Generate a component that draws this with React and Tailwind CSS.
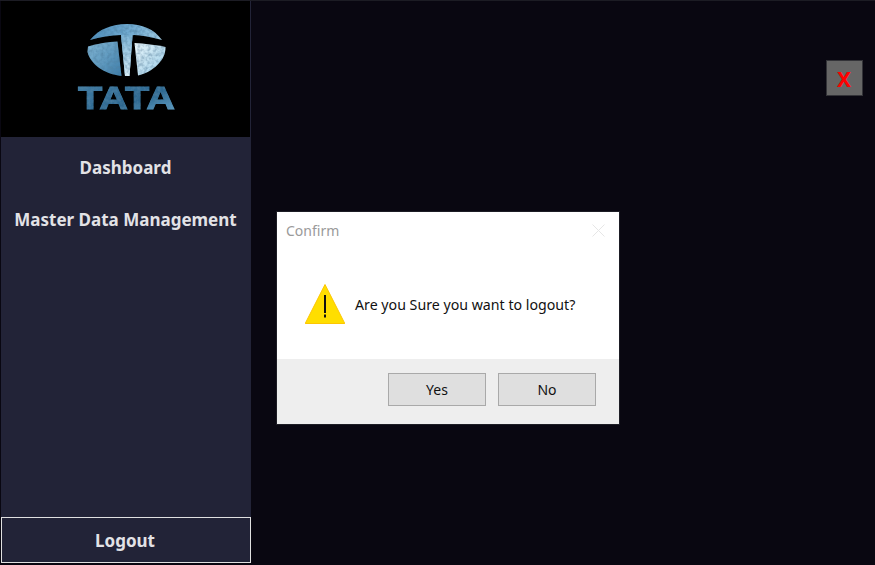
import React from "react";

function TataLogo() {
  return (
    <svg width="110" height="100" viewBox="70 15 110 100" className="block">
      <defs>
        <linearGradient id="up" x1="0" y1="0" x2="1" y2="0.4">
          <stop offset="0" stopColor="#4a8ab8" />
          <stop offset="0.6" stopColor="#78b0d4" />
          <stop offset="1" stopColor="#a8d0e6" />
        </linearGradient>
        <linearGradient id="left" x1="0" y1="0" x2="1" y2="1">
          <stop offset="0" stopColor="#86bad8" />
          <stop offset="1" stopColor="#3d7ca8" />
        </linearGradient>
        <linearGradient id="right" x1="0" y1="0" x2="1" y2="1">
          <stop offset="0" stopColor="#eaf7fc" />
          <stop offset="1" stopColor="#9accE6" />
        </linearGradient>
        <linearGradient id="stem" x1="0" y1="0" x2="0" y2="1">
          <stop offset="0" stopColor="#7fb5d6" />
          <stop offset="1" stopColor="#d8eff9" />
        </linearGradient>
        <linearGradient id="word" x1="0" y1="0" x2="1" y2="1">
          <stop offset="0" stopColor="#457fa6" />
          <stop offset="0.6" stopColor="#2c678f" />
          <stop offset="1" stopColor="#6fb0d6" />
        </linearGradient>
        <filter id="soft" x="-5%" y="-5%" width="110%" height="110%">
          <feTurbulence type="fractalNoise" baseFrequency="0.3" numOctaves="2" seed="4" result="n" />
          <feColorMatrix in="n" type="matrix" values="0 0 0 0 0.08  0 0 0 0 0.22  0 0 0 0 0.36  0 0 0 1.4 -0.5" result="t" />
          <feComposite in="t" in2="SourceAlpha" operator="in" result="g" />
          <feMerge result="m">
            <feMergeNode in="SourceGraphic" />
            <feMergeNode in="g" />
          </feMerge>
          <feGaussianBlur in="m" stdDeviation="0.5" />
        </filter>
      </defs>
      <g filter="url(#soft)">
        <path
          d="M89 40 C98 29 111 24 126 24 C141 24 153 29 161 40 C150 37 141 35.5 133 35 L131.5 35.6 L128.5 76 L124 76 L120 35 C110 35.5 99 37 89 40 Z"
          fill="url(#up)"
        />
        <path d="M120 35 L131.5 35.6 L128.5 76 L124 76 Z" fill="url(#stem)" />
        <path
          d="M87 46.5 C97 43.5 107 42 116.5 41.5 L120.5 76 C102 74 89 63 86.5 52 Z"
          fill="url(#left)"
        />
        <path
          d="M133.5 43 C143 43.5 155 45 164.5 47 C165 60 152 72 137 75.5 Z"
          fill="url(#right)"
        />
        <text
          x="77"
          y="108.5"
          textLength="97"
          lengthAdjust="spacingAndGlyphs"
          fill="url(#word)"
          stroke="url(#word)"
          strokeWidth="0.9"
          fontFamily="'Liberation Sans', sans-serif"
          fontWeight="700"
          fontSize="32"
        >
          TATA
        </text>
      </g>
    </svg>
  );
}

function Warning() {
  return (
    <svg width="40" height="40" viewBox="0 0 40 40" className="block shrink-0">
      <path d="M20 0.5 L39.8 39.5 L0.2 39.5 Z" fill="#ffde00" stroke="#fdc602" strokeWidth="1" />
      <rect x="19" y="11" width="2" height="18" fill="#111" />
      <rect x="19" y="30.5" width="2" height="3" fill="#111" />
    </svg>
  );
}

export default function App() {
  return (
    <div
      className="relative h-[565px] w-[875px] overflow-hidden bg-[#090711] border-t border-t-[#1c1c24] pl-px flex"
      style={{ fontFamily: "'Noto Sans', 'Open Sans', sans-serif" }}
    >
      <aside className="w-[250px] h-[562px] flex flex-col bg-[#222337] text-[#e2e2e6] font-bold">
        <div className="h-[136px] w-[249px] bg-black flex justify-center pt-[14px] shrink-0">
          <TataLogo />
        </div>
        <div className="flex-1 flex flex-col items-center pt-[18px] pr-px gap-[26px] text-[17px] leading-[26px]">
          <span>Dashboard</span>
          <span className="whitespace-nowrap">Master Data Management</span>
        </div>
        <button className="h-[46px] w-[250px] border border-[#e0e0e0] pr-[2px] pt-[2px] text-[17px] font-bold shrink-0">
          Logout
        </button>
      </aside>

      <main className="flex-1 flex justify-end items-start pt-[59px] pr-[12px]">
        <button className="w-[37px] h-[36px] bg-[#666666] border border-[#333338] text-[#ff0000] text-[21px] leading-none font-bold flex items-center justify-center pt-[2px] pr-px">
          X
        </button>
      </main>

      <div className="absolute left-[276px] top-[210px] w-[344px] h-[214px] bg-white border border-[#1d1d25] flex flex-col">
        <div className="h-[36px] flex items-center justify-between pl-[9px] pr-[14px] text-[14px] text-[#9a9a9a]">
          <span>Confirm</span>
          <svg width="13" height="13" viewBox="0 0 13 13">
            <path d="M0.5 0.5 L12.5 12.5 M12.5 0.5 L0.5 12.5" stroke="#e6e6e6" strokeWidth="1" />
          </svg>
        </div>
        <div className="h-[111px] flex items-center pl-[28px] gap-[10px] text-[14.2px] text-[#111]">
          <Warning />
          <span className="whitespace-nowrap mt-[2px]">Are you Sure you want to logout?</span>
        </div>
        <div className="flex-1 bg-[#eeeeee] flex items-start justify-end gap-[12px] pt-[14px] pr-[23px] text-[14px] text-[#111]">
          <button className="w-[98px] h-[33px] bg-[#dfdfdf] border border-[#a9a9a9]">Yes</button>
          <button className="w-[98px] h-[33px] bg-[#dfdfdf] border border-[#a9a9a9]">No</button>
        </div>
      </div>
    </div>
  );
}
